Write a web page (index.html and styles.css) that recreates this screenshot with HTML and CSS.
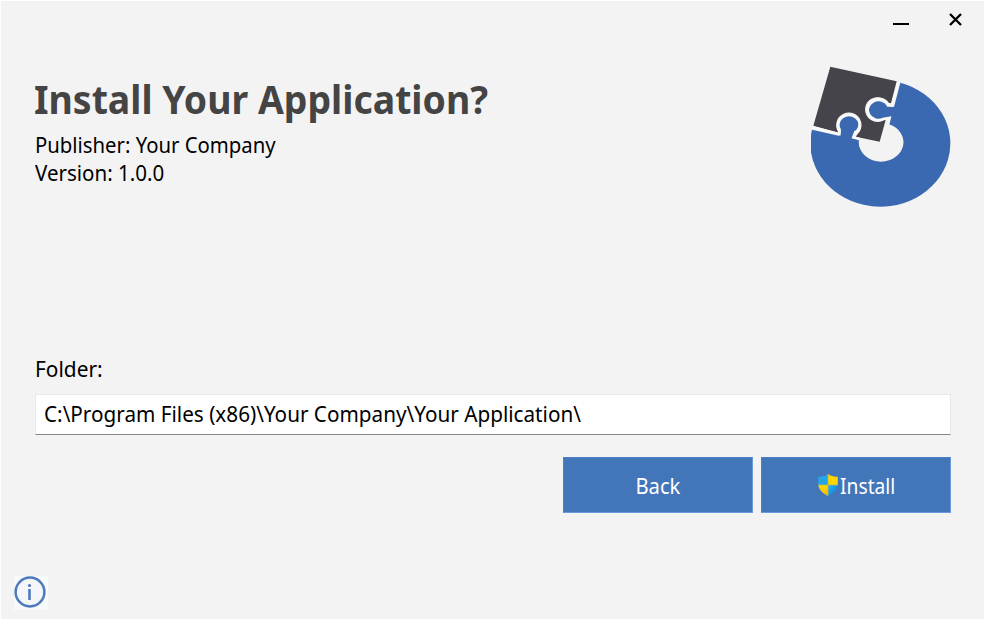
FILE: index.html
```html
<!DOCTYPE html>
<html lang="en">
<head>
<meta charset="utf-8">
<title>Install Your Application</title>
<link rel="stylesheet" href="styles.css">
</head>
<body>
<main class="window">
  <div class="controls">
    <svg width="16" height="16" viewBox="0 0 16 16"><path d="M0 11h16" stroke="#000" stroke-width="2"/></svg>
    <svg width="13" height="13" viewBox="0 0 13 13"><path d="M1 1l11 11M12 1L1 12" stroke="#000" stroke-width="2.3"/></svg>
  </div>
  <header class="header">
    <div class="heading">
      <h1><span>Install Your Application?</span></h1>
      <p class="publisher"><span>Publisher: Your Company</span></p>
      <p class="version"><span>Version: 1.0.0</span></p>
    </div>
    <svg class="logo" width="140" height="141" viewBox="33 35 420 423">
      <path fill="#3b69b1" d="M301 85A210 190 0 1 1 36 226L116 244L123 225A29 29 0 1 1 168 228L157 251L177 256A67 58 0 1 0 265 209L270 191L255 190A29 28 0 1 1 262 157L282 158Z"/>
      <path fill="#45444a" d="M91 37L290 81L273 147L263 145A37 37 0 1 0 250 198L257 197L239 262L167 247L180 230A38 38 0 1 0 111 226L116 236L40 214Z"/>
      <g fill="none" stroke="#fafafa" stroke-width="8">
        <path d="M296 83L277 153L265 151A33 32 0 1 0 250 194L269 191L264 210"/>
        <path d="M37 219L118 239L119 231A33 32 0 1 1 176 229L166 233L160 249L178 254"/>
      </g>
    </svg>
  </header>
  <section class="folder">
    <label for="path"><span>Folder:</span></label>
    <div class="field" id="path"><span>C:\Program Files (x86)\Your Company\Your Application\</span></div>
  </section>
  <div class="actions">
    <button class="back"><span>Back</span></button>
    <button class="install">
      <svg width="20" height="22" viewBox="0 0 20 22">
        <defs><clipPath id="shield"><path d="M10 0C7 2 4 3 .3 2.7V10C.3 15 4 19 10 22C16 19 19.8 15 19.8 10V2.7C16 3 13 2 10 0Z"/></clipPath>
        <linearGradient id="blue" x2="1" y2="1"><stop stop-color="#2bb3ee"/><stop offset="1" stop-color="#0878d4"/></linearGradient>
        <linearGradient id="gold" x2="0" y2="1"><stop stop-color="#ffda00"/><stop offset="1" stop-color="#f5b80a"/></linearGradient></defs>
        <g clip-path="url(#shield)"><path fill="#25a5e7" d="M0 0h10v11H0z"/><path fill="#ffd500" d="M10 0h10v11H10z"/><path fill="url(#gold)" d="M0 11h10v11H0z"/><path fill="url(#blue)" d="M10 11h10v11H10z"/><path d="M10 0v22M0 11h20" stroke="#b8b653" stroke-width=".8"/></g>
      </svg><span>Install</span>
    </button>
  </div>
  <footer class="footer">
    <div class="info">
      <svg width="34" height="34" viewBox="0 0 34 34"><circle cx="16" cy="16" r="14.4" fill="#f5f6fa" stroke="#4d79bd" stroke-width="2.5"/><circle cx="15.5" cy="9.5" r="1.6" fill="#4d79bd"/><path d="M15.5 13v11" stroke="#4d79bd" stroke-width="2.6"/></svg>
    </div>
  </footer>
</main>
</body>
</html>
```
FILE: styles.css
```css
* { box-sizing: border-box; }
body { margin: 0; background: #fff; }
.window {
  width: 985px;
  height: 619px;
  border: 1px solid #fff;
  border-bottom: 0;
  background: #f3f3f3;
  color: #000;
  font: 21.5px/28px "Noto Sans", "Open Sans", sans-serif;
  display: flex;
  flex-direction: column;
  overflow: hidden;
}
h1, p { margin: 0; white-space: nowrap; }
h1 span, p span, label span, .field span {
  display: inline-block;
  transform-origin: left center;
}
.controls {
  height: 65px;
  padding: 12px 22px 0 0;
  display: flex;
  justify-content: flex-end;
  gap: 40px;
}
.controls svg { display: block; }
.header {
  height: 288px;
  padding: 0 33px 0 34px;
  display: flex;
  justify-content: space-between;
}
h1 {
  padding-top: 5px;
  color: #444;
  font-size: 40px;
  line-height: 56px;
  height: 65px;
  margin-left: -1px;
}
h1 span { transform: scaleX(.935); }
.publisher span { transform: scaleX(.945); }
.version span { transform: scaleX(.955); }
.logo { display: block; }
.folder { padding: 1px 33px 0 34px; height: 103px; }
.folder label { display: block; height: 39px; }
.folder label span { transform: scaleX(.97); }
.field {
  height: 41px;
  padding: 5px 8px;
  border: 1px solid #e9e9e9;
  border-bottom-color: #868686;
  background: #fff;
  white-space: nowrap;
}
.field span { transform: scaleX(.963); }
.actions {
  display: flex;
  justify-content: flex-end;
  gap: 8px;
  padding-right: 33px;
}
button {
  width: 190px;
  height: 56px;
  padding: 2px 0 0;
  border: 1px solid #4a80cb;
  border-right-color: #6b99dc;
  border-bottom-color: #6b99dc;
  background: #4376b9;
  color: #fff;
  font: inherit;
  display: flex;
  align-items: center;
  justify-content: center;
}
.back span { transform: scaleX(.94); }
.install { justify-content: flex-start; padding-left: 56px; }
.install svg { margin-top: -2px; }
.install span { transform: scaleX(.895); transform-origin: left center; margin-left: 2px; }
.footer { margin-top: auto; padding: 0 0 9px 13px; }
.info { width: 34px; height: 34px; background: #f8f9fb; }
.info svg { display: block; }
```
